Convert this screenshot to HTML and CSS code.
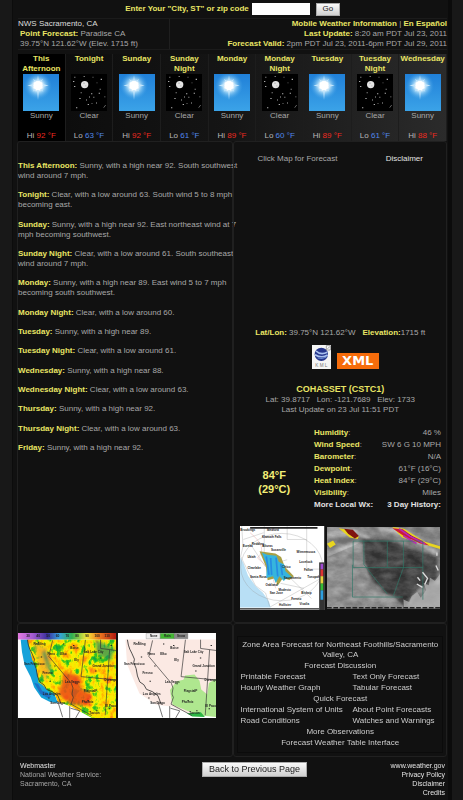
FILE: index.html
```html
<!DOCTYPE html>
<html lang="en">
<head>
<meta charset="utf-8">
<title>NWS Sacramento, CA - Point Forecast</title>
<link rel="stylesheet" href="styles.css">
</head>
<body>
<svg class="defs" aria-hidden="true">
  <defs>
    <radialGradient id="glow"><stop offset="0" stop-color="#fff"/><stop offset=".3" stop-color="#fff"/><stop offset=".5" stop-color="#a8daf8" stop-opacity=".8"/><stop offset="1" stop-color="#3a9ee6" stop-opacity="0"/></radialGradient>
    <linearGradient id="sky" x2="0" y2="1"><stop offset="0" stop-color="#2080d8"/><stop offset="1" stop-color="#3ba3e8"/></linearGradient>
    <symbol id="sunny" viewBox="0 0 108 112" preserveAspectRatio="none">
      <path fill="url(#sky)" d="M0 0h108v112H0z"/>
      <circle cx="45" cy="36" r="42" fill="url(#glow)"/>
      <path fill="#c4e6fc" d="M45 4l3 20 12-10-7 15 24 6-24 5 8 14-13-9-3 34-3-34-13 9 8-14-24-5 24-6-7-15 12 10z"/>
      <circle cx="45" cy="35" r="14" fill="#fff"/>
    </symbol>
    <symbol id="clear" viewBox="0 0 108 112" preserveAspectRatio="none">
      <path d="M0 0h108v112H0z"/>
      <circle cx="41" cy="32" r="11" fill="#e4e4e4"/>
      <path fill="#bbb" d="M37 26h4v4h-4zM43 34h3v4h-3z"/>
      <path fill="#aaa" d="M10 8h3v3h-3zM38 6h3v3h-3zM65 8h2v3h-2zM89 14h4v4h-4zM6 21h4v3H6zM77 26h2v2h-2zM9 36h4v3H9zM29 55h3v3h-3zM60 58h4v3h-4zM86 45h3v3h-3zM83 57h4v3h-4zM100 68h3v2h-3zM54 68h3v3h-3zM25 73h4v3h-4zM45 77h3v3h-3zM67 69h3v3h-3zM75 86h3v3h-3zM50 91h4v3h-4zM15 101h4v3h-4zM62 88h2v3h-2z"/>
      <path stroke="#999" stroke-width="2" d="M98 102l6-8"/>
    </symbol>
    <filter id="heat" x="0" y="0" width="1" height="1" color-interpolation-filters="sRGB">
      <feTurbulence type="fractalNoise" baseFrequency=".045 .032" numOctaves="4" seed="8"/>
      <feColorMatrix values="1 0 0 0 0 1 0 0 0 0 1 0 0 0 0 0 0 0 0 1"/>
      <feComponentTransfer><feFuncR type="table" tableValues="0 0 .1 .3 .95 1 1 1 .9 .8"/><feFuncG type="table" tableValues=".5 .6 .7 .8 .95 .88 .7 .5 .3 .1"/><feFuncB type="table" tableValues=".7 .4 .2 .1 0 0 0 .1 .1 0"/></feComponentTransfer>
      <feComposite in2="SourceGraphic" operator="in"/>
    </filter>
    <filter id="cloud" x="0" y="0" width="1" height="1" color-interpolation-filters="sRGB">
      <feTurbulence type="fractalNoise" baseFrequency=".025 .04" numOctaves="4" seed="5"/>
      <feColorMatrix values="1.6 0 0 0 -.4 1.6 0 0 0 -.4 1.6 0 0 0 -.4 0 0 0 0 1"/>
      <feComposite in2="SourceGraphic" operator="in"/>
    </filter>
    <filter id="soft"><feGaussianBlur stdDeviation="5"/></filter>
    <linearGradient id="scale"><stop offset="0" stop-color="#e37be0"/><stop offset=".15" stop-color="#a35bd0"/><stop offset=".3" stop-color="#3a2f9c"/><stop offset=".42" stop-color="#35a2e0"/><stop offset=".55" stop-color="#30b050"/><stop offset=".7" stop-color="#f2e63a"/><stop offset=".82" stop-color="#f08020"/><stop offset="1" stop-color="#b01810"/></linearGradient>
    <g id="borders" fill="none" stroke="#333" stroke-width="2">
      <path d="M28 20l3 16 4 12 6 12 8 18-2 10 7 18 4 22 7 18 12 8 8 14 18 7 16 12 10 26" stroke-width="2.500"/>
      <path d="M103 22l-11 48 67 80 5 14-3 18 4 10-7 20 62 34M201 20l-13 110 104 10M273 50l-13 195M246 20v26l46 6M119 205l14 46M154 218v35M156 224l28 8-12 21"/>
    </g>
    <g id="cities" class="map-label">
      <text x="46" y="36">Redding</text><text x="88" y="66">Reno</text><text x="126" y="67">Elko</text><text x="156" y="48">Boise</text><text x="196" y="60">Salt Lake City</text><text x="18" y="94">San Francisco</text><text x="222" y="100">Grand Junction</text><text x="73" y="122">Fresno</text><text x="168" y="84">Ely</text><text x="140" y="149">Las Vegas</text><text x="258" y="143">Durango</text><text x="196" y="176">Flagstaff</text><text x="74" y="185">Los Angeles</text><text x="96" y="212">San Diego</text><text x="190" y="209">Phoenix</text><text x="260" y="221">El Paso</text><text x="212" y="240">Tucson</text>
      <path d="M60 26h4v3h-4zM68 70h4v3h-4zM134 31h4v3h-4zM108 97h4v3h-4zM94 142h4v3h-4zM164 36h4v3h-4zM230 112h4v3h-4zM244 73h4v3h-4zM276 36h4v3h-4zM90 192h4v3h-4zM174 150h4v3h-4zM232 168h4v3h-4zM207 200h4v3h-4zM270 224h4v3h-4zM233 230h4v3h-4z"/>
    </g>
  </defs>
</svg>

<div class="page">
  <form class="search">
    <label for="place">Enter Your "City, ST" or zip code</label>
    <input id="place" type="text">
    <button type="button" class="go">Go</button>
  </form>

  <header class="info">
    <div class="office">
      <div class="bright">NWS Sacramento, CA</div>
      <div class="indent"><b>Point Forecast:</b> Paradise CA</div>
      <div class="indent">39.75°N 121.62°W (Elev. 1715 ft)</div>
    </div>
    <div class="updates">
      <div><a class="gold" href="#">Mobile Weather Information</a> | <a class="gold" href="#">En Español</a></div>
      <div><b>Last Update:</b> 8:20 am PDT Jul 23, 2011</div>
      <div><b>Forecast Valid:</b> 2pm PDT Jul 23, 2011-6pm PDT Jul 29, 2011</div>
    </div>
  </header>

  <section class="days">
    <div class="day"><b>This<br>Afternoon</b><svg><use href="#sunny"/></svg><span>Sunny</span><span class="temp">Hi <em class="hi">92 °F</em></span></div>
    <div class="day"><b>Tonight</b><svg><use href="#clear"/></svg><span>Clear</span><span class="temp">Lo <em class="lo">63 °F</em></span></div>
    <div class="day"><b>Sunday</b><svg><use href="#sunny"/></svg><span>Sunny</span><span class="temp">Hi <em class="hi">92 °F</em></span></div>
    <div class="day"><b>Sunday<br>Night</b><svg><use href="#clear"/></svg><span>Clear</span><span class="temp">Lo <em class="lo">61 °F</em></span></div>
    <div class="day"><b>Monday</b><svg><use href="#sunny"/></svg><span>Sunny</span><span class="temp">Hi <em class="hi">89 °F</em></span></div>
    <div class="day"><b>Monday<br>Night</b><svg><use href="#clear"/></svg><span>Clear</span><span class="temp">Lo <em class="lo">60 °F</em></span></div>
    <div class="day"><b>Tuesday</b><svg><use href="#sunny"/></svg><span>Sunny</span><span class="temp">Hi <em class="hi">89 °F</em></span></div>
    <div class="day"><b>Tuesday<br>Night</b><svg><use href="#clear"/></svg><span>Clear</span><span class="temp">Lo <em class="lo">61 °F</em></span></div>
    <div class="day"><b>Wednesday</b><svg><use href="#sunny"/></svg><span>Sunny</span><span class="temp">Hi <em class="hi">88 °F</em></span></div>
  </section>

  <main class="columns">
    <section class="panel details">
      <p><b>This Afternoon:</b> Sunny, with a high near 92. South southwest<br>wind around 7 mph.</p>
      <p><b>Tonight:</b> Clear, with a low around 63. South wind 5 to 8 mph<br>becoming east.</p>
      <p><b>Sunday:</b> Sunny, with a high near 92. East northeast wind at 7<br>mph becoming southwest.</p>
      <p><b>Sunday Night:</b> Clear, with a low around 61. South southeast<br>wind around 7 mph.</p>
      <p><b>Monday:</b> Sunny, with a high near 89. East wind 5 to 7 mph<br>becoming south southwest.</p>
      <p><b>Monday Night:</b> Clear, with a low around 60.</p>
      <p><b>Tuesday:</b> Sunny, with a high near 89.</p>
      <p><b>Tuesday Night:</b> Clear, with a low around 61.</p>
      <p><b>Wednesday:</b> Sunny, with a high near 88.</p>
      <p><b>Wednesday Night:</b> Clear, with a low around 63.</p>
      <p><b>Thursday:</b> Sunny, with a high near 92.</p>
      <p><b>Thursday Night:</b> Clear, with a low around 63.</p>
      <p><b>Friday:</b> Sunny, with a high near 92.</p>
    </section>

    <section class="panel local">
      <div class="map-links"><span>Click Map for Forecast</span><a href="#">Disclaimer</a></div>
      <div class="position"><span><b>Lat/Lon:</b> 39.75°N 121.62°W</span><span><b>Elevation:</b>1715 ft</span></div>
      <div class="feeds">
        <a href="#" aria-label="KML"><svg class="kml" viewBox="0 0 57 72"><path fill="#f5f5f5" d="M0 0h57v72H0z"/><circle cx="28" cy="28" r="20" fill="#26368c"/><path fill="none" stroke="#a9c1ef" stroke-width="5" d="M12 18q14 14 34 4M9 29q20 12 38 1"/><path fill="none" stroke="#6789d2" stroke-width="3" d="M17 39q14 5 26-3"/><path fill="#fff" stroke="#777" stroke-width="2" d="M43 2h12v13H43zM46 12l7-7"/><text x="28" y="67" class="kml-text">K M L</text></svg></a>
        <a class="xml" href="#">XML</a>
      </div>
      <h2>COHASSET (CSTC1)</h2>
      <div class="center pre">Lat: 39.8717   Lon: -121.7689   Elev: 1733</div>
      <div class="center">Last Update on 23 Jul 11:51 PDT</div>
      <div class="current">
        <div class="now">84°F<br>(29°C)</div>
        <table>
          <tr><th>Humidity<i>:</i></th><td>46 %</td></tr>
          <tr><th>Wind Speed<i>:</i></th><td>SW 6 G 10 MPH</td></tr>
          <tr><th>Barometer<i>:</i></th><td>N/A</td></tr>
          <tr><th>Dewpoint<i>:</i></th><td>61°F (16°C)</td></tr>
          <tr><th>Heat Index<i>:</i></th><td>84°F (29°C)</td></tr>
          <tr><th>Visibility<i>:</i></th><td>Miles</td></tr>
          <tr class="more"><th><a href="#">More Local Wx:</a></th><td><a href="#">3 Day History:</a></td></tr>
        </table>
      </div>
      <div class="imagery">
        <svg class="radar" viewBox="0 0 250 250">
          <path fill="#fff" d="M0 0h250v250H0z"/>
          <path fill="#b8dff5" d="M0 92l10 18 14 38 22 30 22 20 18 26 5 18H0z"/>
          <g fill="none" stroke="#999"><path d="M5 0l4 60-7 30 22 45 22 42 30 22 12 40M72 0v80l140 135M198 0v128h52M140 0v40h58M10 40l60-20M90 240l160-90M35 60l40 60 65-20M120 170l70 15"/><ellipse cx="124" cy="122" rx="122" ry="100"/><path stroke="#d88" d="M30 20q55 45 22 75 42 30 54 90"/></g>
          <path fill="#a8a045" d="M58 75l47 7 17 10 11 29 27 28-13 11-20-5-15 22-8-22-22 6-5-40z"/>
          <path fill="#36b5dd" d="M65 79l15 6 28 3 7 18 16 8 4 20 19 18-16 3-8 8-13-14-11 20-8-20-20 5 2-38-11-26z"/>
          <path fill="none" stroke="#278ce2" stroke-width="5" d="M78 90l8 55M91 95l3 50M107 94l5 56M121 113l5 33"/>
          <g class="map-label"><text x="1" y="14">Brookings</text><text x="80" y="15">Medford</text><text x="65" y="35">Klamath Falls</text><text x="8" y="62">Eureka</text><text x="35" y="56">Redding</text><text x="66" y="62">Alturas</text><text x="168" y="80">Winnemucca</text><text x="22" y="95">Ukiah</text><text x="92" y="74">Susanville</text><text x="176" y="111">Lovelock</text><text x="22" y="129">Clearlake</text><text x="125" y="125">Chico</text><text x="190" y="133">Fallon</text><text x="30" y="154">Santa Rosa</text><text x="130" y="157">Sacramento</text><text x="200" y="154">Tonopah</text><text x="76" y="179">Oakland</text><text x="114" y="192">Modesto</text><text x="88" y="202">San Jose</text><text x="152" y="219">Fresno</text><text x="182" y="202">Bishop</text><text x="116" y="237">Hollister</text><text x="177" y="235">Visalia</text><path d="M30 3h200v5H30zM0 244h235v4H0z"/></g>
          <path fill="#333" d="M235 108h15v142h-15z"/><path fill="#a04bd0" d="M239 112h8v17h-8z"/><path fill="#d33" d="M239 129h8v20h-8z"/><path fill="#e9d33d" d="M239 149h8v22h-8z"/><path fill="#3b3" d="M239 171h8v20h-8z"/><path fill="#2c9fe0" d="M239 191h8v28h-8z"/>
        </svg>
        <svg class="satellite" viewBox="0 0 338 243">
          <path fill="#888" d="M0 0h338v243H0z"/>
          <path fill="none" stroke="#e5e5e5" stroke-width="15" opacity=".65" filter="url(#soft)" d="M0 25l80-10 45 20M0 85l94-40M155 5l80 12 95 65M238 230l60-92 40 30"/>
          <path fill="#999" d="M0 90l105-45 13 70 116 128H0z"/>
          <path fill="#343434" opacity=".9" filter="url(#soft)" d="M104 35l95 8 127 48 5 65-50 22-34 38-10 30-33-36-32-15-39-38-18-44z"/>
          <path d="M0 0h338v243H0z" filter="url(#cloud)" opacity=".18"/>
          <path fill="#b9b9b9" d="M230 243l-2-27 17 8 8-18 16-12 11 17 16-23-8-20 16 6 3-23 15 10 16-22v104z" opacity=".7"/>
          <path fill="#e8d51f" d="M35 4l28 4 32 20-3 8-24-5zM195 0l35 5 60 38 48 15v8l-52-15-62-20zM0 50l18-10 8 12-17 11z"/>
          <path fill="#801510" d="M51 5l26 3 18 19-12 7-20-14z"/>
          <path fill="#cc193b" d="M195 4l31 3 27 19 25 12 27 17-27-6-25-12-15-4z"/>
          <path stroke="#b62bb3" stroke-width="5" d="M215 5l32 22 46 24M228 26l39 23"/>
          <path fill="none" stroke="#2f7868" stroke-width="2" d="M78 42h208v79H78zM110 42v70l70 88M180 42v79M228 42v79l-30 84M76 113v96h150M286 121v96"/>
          <path fill="none" stroke="#ddd" stroke-width="4" d="M285 135l15 18-8 18M270 150l8 10M328 76v10M325 115l7 15M268 170l17 10"/>
          <path stroke="#222" stroke-width="4" stroke-dasharray="14 5" d="M0 241h338"/>
        </svg>
      </div>
    </section>

    <section class="panel maps">
      <svg viewBox="0 0 292 253">
        <path fill="#fff" d="M0 0h292v253H0z"/>
        <path fill="#16a2da" d="M8 19h26l6 30 11 25 5 35 10 38 20 18 20 8 13 36-25-4-25-13-21-30-10-30-18-35-8-40z"/>
        <path fill="#1e70c5" d="M48 148l12 4 12 20 15 5 12 14-10 3-22-12z"/>
        <path filter="url(#heat)" d="M28 19h264v234h-72l-62-34-40-15-10-24-18-7-17-18-12-8-5-38-14-30z"/>
        <g filter="url(#soft)"><path fill="#ec481b" opacity=".85" d="M137 115l43 12 10 38 30 18-13 34-48-4-40-30 10-30z"/><path fill="#f8a52b" opacity=".7" d="M45 25l38 17 17 35-17 70-20-40z"/><path fill="#178b62" opacity=".7" d="M230 20l58 25-12 38-40-18zM80 48l24 70-8 5-25-63z"/></g>
        <use href="#borders"/><use href="#cities"/>
        <path fill="url(#scale)" d="M0 0h292v19H0z"/>
        <g class="scale-text"><text x="30" y="13">30</text><text x="60" y="13">40</text><text x="90" y="13">50</text><text x="118" y="13">60</text><text x="147" y="13">70</text><text x="176" y="13">80</text><text x="206" y="13">90</text><text x="236" y="13">100</text><text x="266" y="13">110</text></g>
      </svg>
      <svg viewBox="0 0 292 253">
        <path fill="#fff" d="M0 0h292v253H0z"/>
        <path fill="#fbe9e3" d="M22 19h270v230l-72-6-62-24-44-5-50-34-15-35-22-52z"/>
        <path fill="#afe78f" d="M155 170l20-26 20-5 5-12 28-3 15 18 5 26 18 15 5-34 21-13v114l-54-5-75-31-5-25z"/>
        <path fill="#2cb744" d="M205 239l42-3 12 14-38-1z"/>
        <use href="#borders"/><use href="#cities"/>
        <path fill="#eee" stroke="#777" d="M84 1h42v16H84z"/><path fill="#42b832" stroke="#555" d="M126 1h42v16h-42z"/><path fill="#888" stroke="#555" d="M168 1h40v16h-40z"/>
        <g class="map-label"><text x="95" y="13">None</text><text x="137" y="13">Rain</text><text x="176" y="13">Snow</text></g>
      </svg>
    </section>

    <nav class="panel links">
      <div class="links-box">
        <a class="wide" href="#">Zone Area Forecast for Northeast Foothills/Sacramento<br>Valley, CA</a>
        <a class="wide" href="#">Forecast Discussion</a>
        <a href="#">Printable Forecast</a><a href="#">Text Only Forecast</a>
        <a href="#">Hourly Weather Graph</a><a href="#">Tabular Forecast</a>
        <a class="wide" href="#">Quick Forecast</a>
        <a href="#">International System of Units</a><a href="#">About Point Forecasts</a>
        <a href="#">Road Conditions</a><a href="#">Watches and Warnings</a>
        <a class="wide" href="#">More Observations</a>
        <a class="wide" href="#">Forecast Weather Table Interface</a>
      </div>
    </nav>
  </main>

  <footer class="footer">
    <div><a href="#">Webmaster</a><br>National Weather Service:<br>Sacramento, CA</div>
    <button type="button" class="back">Back to Previous Page</button>
    <div class="site"><a href="#">www.weather.gov</a><a href="#">Privacy Policy</a><a href="#">Disclaimer</a><a href="#">Credits</a></div>
  </footer>
</div>
</body>
</html>
```
FILE: styles.css
```css
* { box-sizing: border-box; }
body {
  margin: 0;
  background: #181818;
  color: #a8a8a8;
  font: 8px/10px "Liberation Sans", Arial, sans-serif;
}
a { color: #e2e2e2; text-decoration: none; }
b, .gold { color: #e9e565; font-weight: bold; }
svg { display: block; }
p, h2 { margin: 0; }
.defs { position: absolute; width: 0; height: 0; }
.page {
  min-height: 100vh;
  margin: 0 11px 0 12px;
  padding: 0 1px 0 5px;
  background: #111;
  border-right: 4px solid #0b0b0b;
  border-left: 1px solid #0c0c0c;
  white-space: nowrap;
}
.search {
  display: flex;
  justify-content: center;
  align-items: center;
  height: 18px;
  color: #e9e565;
  font-weight: bold;
}
.search input {
  width: 58px;
  height: 12px;
  margin: 0 6px 0 3px;
  padding: 0 2px;
  border: 0;
  background: #fff;
  font: inherit;
}
button {
  border: 1px solid #aaa;
  background: linear-gradient(#fafafa, #d0d0d0);
  color: #222;
  font: 9px/11px "Liberation Sans", Arial, sans-serif;
}
.go { width: 24px; height: 13px; padding: 0; font-size: 8px; line-height: 10px; }
.info { display: flex; border: 1px solid #1b1b1b; border-width: 1px 0; }
.office { flex: 0 0 152px; border-right: 1px solid #1f1f1f; }
.indent { padding-left: 2px; }
.bright { color: #ddd; }
.updates { flex: 1; text-align: right; }
.days {
  display: grid;
  grid-template-columns: repeat(9, 1fr);
  margin-top: 4px;
  background: linear-gradient(90deg, #000 0 11%, #0d0d0d 11%, #151515 50%, #2b2b2b);
}
.day {
  display: flex;
  flex-direction: column;
  align-items: center;
  height: 87px;
  border-right: 1px solid #1d1d1d;
  text-align: center;
}
.day b { height: 20px; }
.day svg { width: 36px; height: 37px; }
.temp { margin-top: 10px; color: #b8b8b8; }
.temp em { font-style: normal; }
.hi { color: #ee2a20; }
.lo { color: #5288ea; }
.columns { display: grid; grid-template-columns: 216fr 214fr; }
.panel { min-width: 0; border: 1px solid #202020; border-radius: 3px; }
.details {
  display: flex;
  flex-direction: column;
  justify-content: space-between;
  margin-left: -1px;
  padding: 19px 0 169px;
}
.map-links { display: flex; justify-content: space-between; padding: 12px 23px 0; }
.position { display: flex; justify-content: center; gap: 7px; padding: 164px 0 7px; }
.feeds { display: flex; justify-content: center; align-items: flex-end; gap: 6px; padding-left: 10px; }
.kml { width: 19px; height: 24px; }
.kml-text { fill: #777; font-size: 14px; text-anchor: middle; }
.xml {
  width: 42px;
  background: #f66c0b;
  color: #fff;
  font: bold 13px/16px "DejaVu Sans", sans-serif;
  text-align: center;
}
h2 { padding: 15px 0 0; color: #e9e565; font-size: 9px; line-height: 11px; text-align: center; }
.center { text-align: center; }
.pre { white-space: pre; }
.current { display: flex; align-items: center; padding: 12px 5px 0 0; }
.now { flex: 1; padding-top: 25px; color: #f2ed76; font-weight: bold; font-size: 11px; line-height: 14px; text-align: center; }
table { flex: 0 0 127px; border-collapse: collapse; }
th, td { height: 12px; padding: 0; line-height: 12px; }
th { color: #e9e565; text-align: left; }
th i { color: #a0a0a0; font-style: normal; font-weight: normal; }
td { text-align: right; }
.more td { font-weight: bold; }
.imagery { display: flex; align-items: center; gap: 2px; padding: 15px 6px 12px; }
.radar { flex: 84; min-width: 0; }
.satellite { flex: 113; min-width: 0; }
.map-label { fill: #222; stroke: none; font-size: 9px; font-weight: bold; }
.scale-text { fill: #222; font-size: 10px; font-weight: bold; text-anchor: middle; }
.maps { display: grid; grid-template-columns: 98px 98px; align-content: start; gap: 2px; margin-left: -1px; padding-top: 9px; }
.links { padding: 12px 3px 3px; }
.links-box {
  display: grid;
  grid-template-columns: 112px 1fr;
  row-gap: 1px;
  padding: 3px 2px 4px;
  border: 1px solid #0b0b0b;
}
.wide { grid-column: 1 / -1; text-align: center; }
.links a { color: #ccc; }
.footer {
  display: flex;
  align-items: flex-start;
  justify-content: space-between;
  padding: 4px 2px 3px 2px;
  font-size: 7px;
  line-height: 9px;
}
.back { height: 15px; margin: 1px 0 0; padding: 0 6px; }
.footer > div { flex: 1; }
.site { display: flex; flex-direction: column; text-align: right; }
.footer > .site { flex: 0 0 138px; }
```
